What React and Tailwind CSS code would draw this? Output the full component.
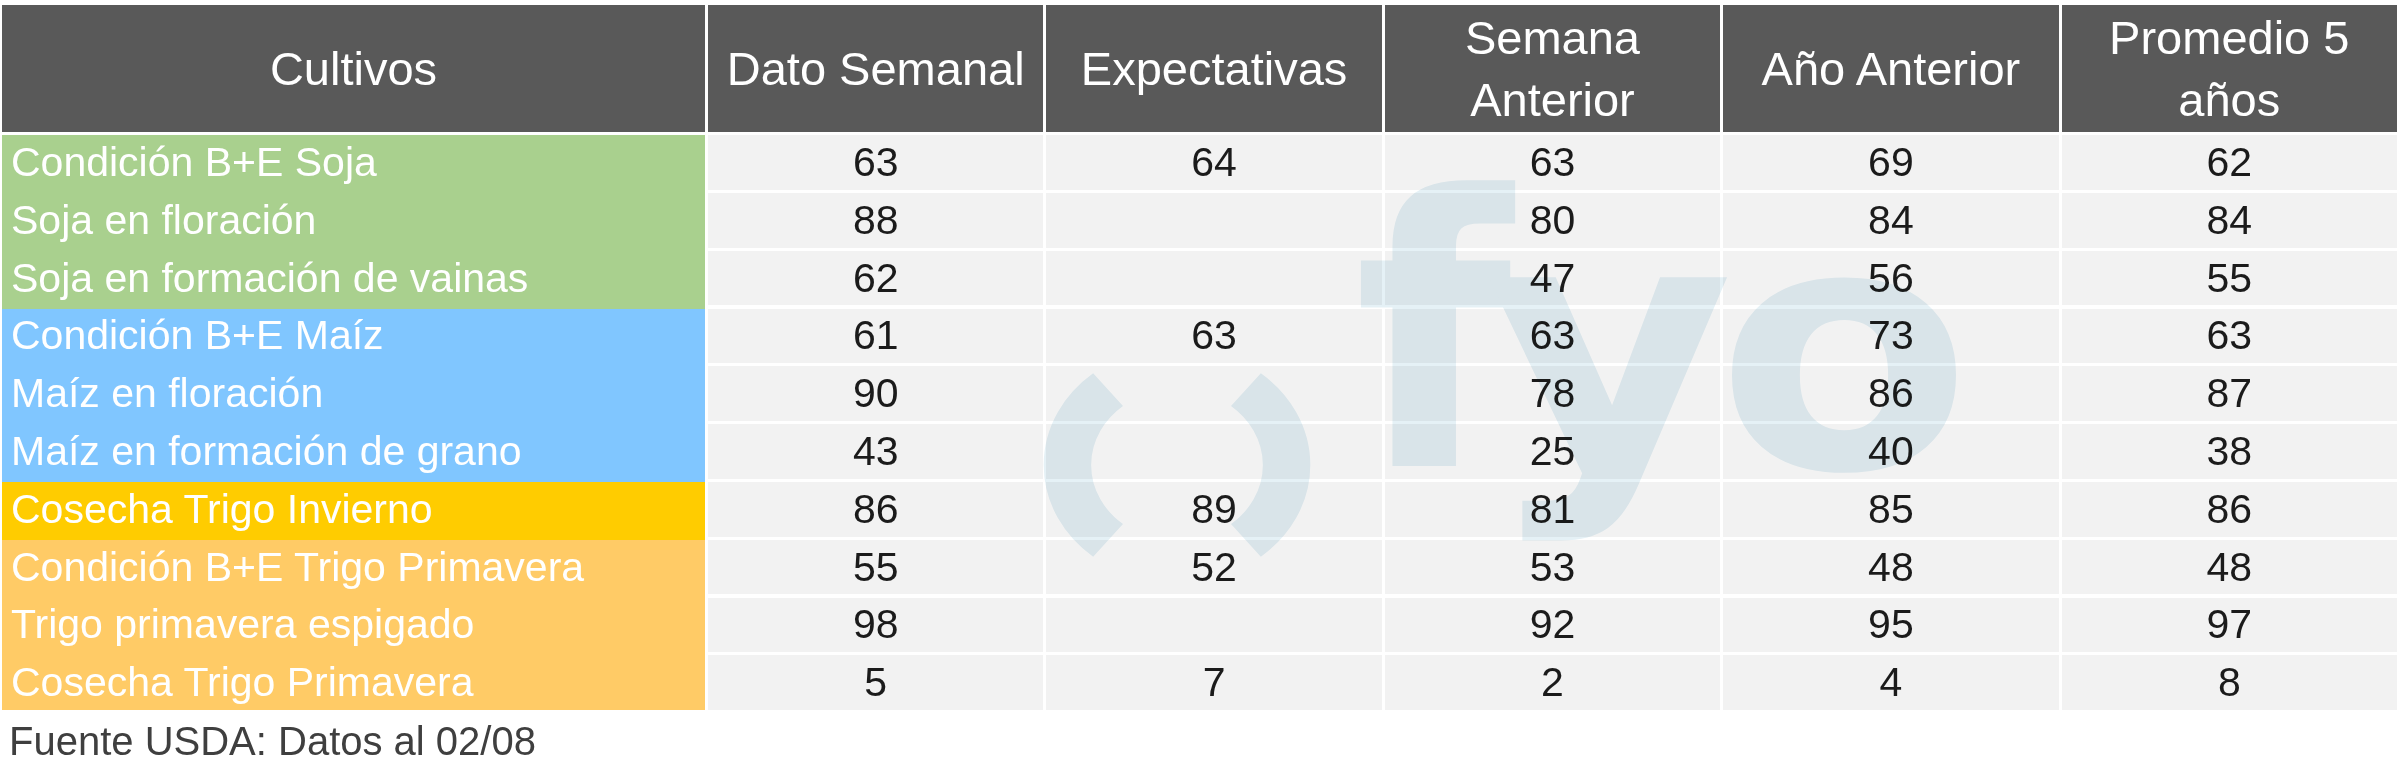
import React from 'react';

const rows = [
  { label: 'Condición B+E Soja', bg: 'bg-[#a9d08e]', v: ['63', '64', '63', '69', '62'] },
  { label: 'Soja en floración', bg: 'bg-[#a9d08e]', v: ['88', '', '80', '84', '84'] },
  { label: 'Soja en formación de vainas', bg: 'bg-[#a9d08e]', v: ['62', '', '47', '56', '55'] },
  { label: 'Condición B+E Maíz', bg: 'bg-[#80c6ff]', v: ['61', '63', '63', '73', '63'] },
  { label: 'Maíz en floración', bg: 'bg-[#80c6ff]', v: ['90', '', '78', '86', '87'] },
  { label: 'Maíz en formación de grano', bg: 'bg-[#80c6ff]', v: ['43', '', '25', '40', '38'] },
  { label: 'Cosecha Trigo Invierno', bg: 'bg-[#ffcc00]', v: ['86', '89', '81', '85', '86'] },
  { label: 'Condición B+E Trigo Primavera', bg: 'bg-[#ffcb66]', v: ['55', '52', '53', '48', '48'] },
  { label: 'Trigo primavera espigado', bg: 'bg-[#ffcb66]', v: ['98', '', '92', '95', '97'] },
  { label: 'Cosecha Trigo Primavera', bg: 'bg-[#ffcb66]', v: ['5', '7', '2', '4', '8'] },
];

const heads = ['Dato Semanal', 'Expectativas', 'Semana Anterior', 'Año Anterior', 'Promedio 5 años'];

const wmFont = "'DejaVu Sans', Verdana, sans-serif";

// watermark "( ) fyo", drawn over the cells and multiplied so the numbers stay dark
const Watermark = () => (
  <svg
    className="absolute left-0 top-0 pointer-events-none mix-blend-multiply"
    width="2400"
    height="771"
    viewBox="0 0 2400 771"
  >
    <g fill="none" stroke="#e5f1f6" strokeWidth="42" transform="translate(1177 465) scale(1.13 1)">
      <path d="M -61 -75.4 A 97 97 0 0 0 -61 75.4" />
      <path d="M 61 -75.4 A 97 97 0 0 1 61 75.4" />
    </g>
    <g fill="#e5f1f6" fontFamily={wmFont} fontWeight="700">
      <text x="1354" y="466" fontSize="376" textLength="158" lengthAdjust="spacingAndGlyphs">f</text>
      <text x="1484" y="466" fontSize="345" textLength="250" lengthAdjust="spacingAndGlyphs">y</text>
      <text x="1716" y="468" fontSize="340" textLength="256" lengthAdjust="spacingAndGlyphs">o</text>
    </g>
  </svg>
);

export default function App() {
  return (
    <div className="relative w-[2400px] h-[771px] bg-white overflow-hidden font-['Liberation_Sans',Arial,sans-serif]">
      <div className="pl-[2px] pr-[3px] pt-[5px]">
        <div className="grid grid-cols-[703px_repeat(5,minmax(0,1fr))] grid-rows-[127px_repeat(10,54.5px)] gap-x-[3px] gap-y-[3.3px]">
          <div className="bg-[#595959] text-white text-[47px] leading-[62px] flex items-center justify-center text-center">
            Cultivos
          </div>
          {heads.map((h) => (
            <div
              key={h}
              className="bg-[#595959] text-white text-[47px] leading-[62px] flex items-center justify-center text-center px-2"
            >
              {h}
            </div>
          ))}
          {rows.map((r, i) => (
            <React.Fragment key={r.label}>
              <div
                className={
                  r.bg +
                  ' text-white text-[41px] leading-none flex items-center pl-[9px] whitespace-nowrap ' +
                  (i < rows.length - 1 ? '-mb-[3.3px] pb-[3.3px]' : '')
                }
              >
                {r.label}
              </div>
              {r.v.map((n, j) => (
                <div
                  key={j}
                  className="bg-[#f2f2f2] text-[#1b1b1b] text-[41px] leading-none flex items-center justify-center"
                >
                  {n}
                </div>
              ))}
            </React.Fragment>
          ))}
        </div>
        <p className="mt-[11px] pl-[7px] text-[40px] leading-[40px] text-[#3f3f3f]">
          Fuente USDA: Datos al 02/08
        </p>
      </div>
      <Watermark />
    </div>
  );
}
